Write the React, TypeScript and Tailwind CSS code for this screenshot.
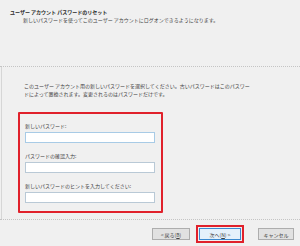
const App = () => {
	return (
		<div
			className="flex flex-col w-[300px] h-[246px] bg-[#f0f0f0] text-[#404040] overflow-hidden"
			style={{ fontFamily: '"Noto Sans CJK JP", sans-serif' }}
		>
			<div className="h-[67px] shrink-0 border-b border-dotted border-[#c4c4c4] pt-[8px]">
				<div className="pl-[10px] text-[5px] leading-[7px] font-bold text-[#2a2a2a]">ユーザー アカウント パスワードのリセット</div>
				<div className="pl-[23px] mt-[1px] text-[5px] leading-[7px]">
					新しいパスワードを使ってこのユーザー アカウントにログオンできるようになります。
				</div>
			</div>
			<div className="h-[152px] shrink-0 border-l border-[#d6d6d6] ml-[1px] pt-[15px]">
				<div className="pl-[22px] text-[5px] leading-[8px]">
					このユーザー アカウント用の新しいパスワードを選択してください。古いパスワードはこのパスワー
					<br />
					ドによって置換されます。変更されるのはパスワードだけです。
				</div>
				<div className="ml-[16px] mt-[14px] w-[145px] h-[101px] border-2 border-[#e0212b] rounded-[1px] pt-[8px] pl-[5px]">
					<div className="text-[5px] leading-[7px]">新しいパスワード:</div>
					<div className="mt-[3px] w-[130px] h-[11px] bg-white border border-[#a8cbe6]" />
					<div className="mt-[9px] text-[5px] leading-[7px]">パスワードの確認入力:</div>
					<div className="mt-[3px] w-[130px] h-[11px] bg-white border border-[#b9c9d6]" />
					<div className="mt-[9px] text-[5px] leading-[7px]">新しいパスワードのヒントを入力してください:</div>
					<div className="mt-[3px] w-[130px] h-[11px] bg-white border border-[#b9c9d6]" />
				</div>
			</div>
			<div className="flex-1 border-t border-dotted border-[#c4c4c4] flex items-start justify-end pr-[6px] pt-[5px]">
				<div className="mt-[3px] w-[38px] h-[12px] bg-[#e1e1e1] border border-[#adadad] flex items-center justify-center text-[5px] leading-none">
					&lt; 戻る(<span className="underline">B</span>)
				</div>
				<div className="ml-[6px] border-2 border-[#e0212b] p-[1px]">
					<div className="w-[42px] h-[12px] bg-[#e5f1fb] border border-[#3c8ad0] flex items-center justify-center text-[5px] leading-none">
						次へ(<span className="underline">N</span>) &gt;
					</div>
				</div>
				<div className="mt-[3px] ml-[14px] w-[36px] h-[12px] bg-[#e1e1e1] border border-[#adadad] flex items-center justify-center text-[5px] leading-none">
					キャンセル
				</div>
			</div>
		</div>
	);
};

export default App;
